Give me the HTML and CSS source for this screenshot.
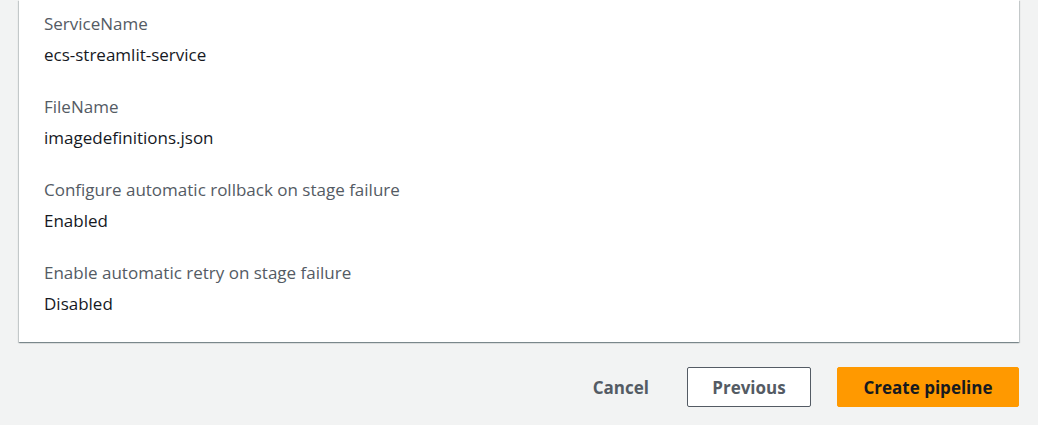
FILE: index.html
```html
<!DOCTYPE html>
<html>
<head>
<meta charset="utf-8">
<link rel="stylesheet" href="styles.css">
</head>
<body>
<div class="page">
  <div class="card">
    <div class="field">
      <div class="label">ServiceName</div>
      <div class="value">ecs-streamlit-service</div>
    </div>
    <div class="field">
      <div class="label">FileName</div>
      <div class="value">imagedefinitions.json</div>
    </div>
    <div class="field">
      <div class="label">Configure automatic rollback on stage failure</div>
      <div class="value">Enabled</div>
    </div>
    <div class="field">
      <div class="label">Enable automatic retry on stage failure</div>
      <div class="value">Disabled</div>
    </div>
  </div>
  <div class="actions">
    <button class="btn btn-link">Cancel</button>
    <button class="btn btn-normal">Previous</button>
    <button class="btn btn-primary">Create pipeline</button>
  </div>
</div>
</body>
</html>
```
FILE: styles.css
```css
html, body {
  margin: 0;
  padding: 0;
  background: #f2f3f3;
  font-family: "Open Sans", "Liberation Sans", sans-serif;
}
.page {
  padding: 0 19px;
}
.card {
  background: #fff;
  box-shadow: 0 1px 1px 0 rgba(0,28,36,.3), 1px 1px 1px 0 rgba(0,28,36,.15), -1px 1px 1px 0 rgba(0,28,36,.15);
  padding: 12px 25px 26px;
  display: flex;
  flex-direction: column;
  gap: 28px;
}
.field {
  display: flex;
  flex-direction: column;
  gap: 7px;
}
.label {
  font-size: 17px;
  line-height: 24px;
  color: #545b64;
}
.value {
  font-size: 17px;
  line-height: 24px;
  color: #16191f;
}
.actions {
  display: flex;
  justify-content: flex-end;
  align-items: center;
  gap: 26px;
  margin-top: 25px;
}
.btn {
  font-family: inherit;
  font-size: 17px;
  font-weight: 700;
  height: 40px;
  border-radius: 2px;
  padding: 0 20px;
  cursor: pointer;
}
.btn-link {
  background: transparent;
  border: 1px solid transparent;
  color: #545b64;
  margin-right: -9px;
}
.btn-normal {
  background: #fff;
  border: 1px solid #545b64;
  color: #545b64;
  width: 124px;
}
.btn-primary {
  background: #ff9900;
  border: 1px solid #ff9900;
  color: #16191f;
  width: 182px;
}
```
